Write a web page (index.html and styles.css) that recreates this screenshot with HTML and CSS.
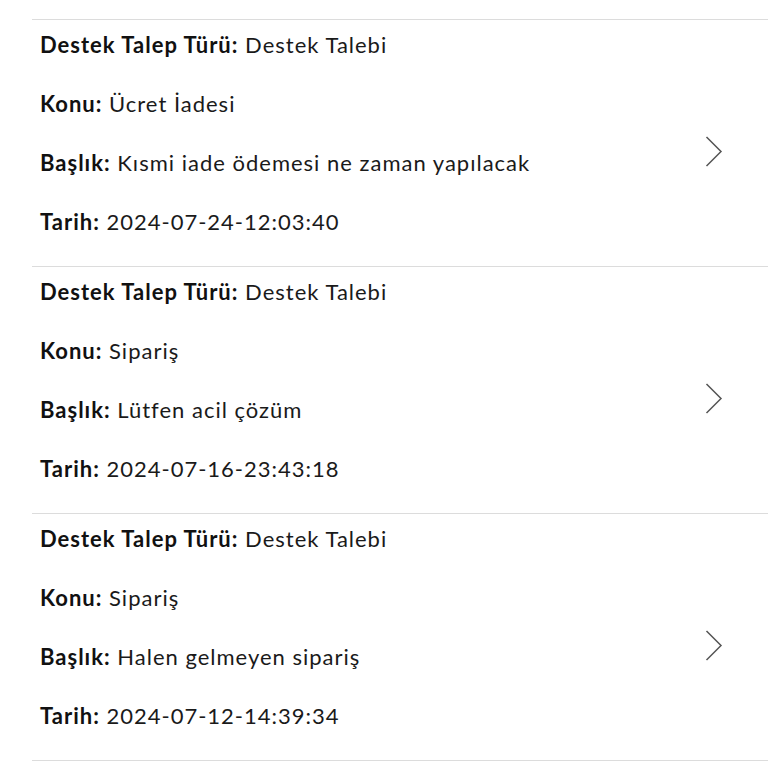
FILE: index.html
```html
<!DOCTYPE html>
<html lang="tr">
<head>
<meta charset="utf-8">
<link rel="stylesheet" href="styles.css">
</head>
<body>
<ul class="list">
  <li class="item">
    <div class="info">
      <p><b>Destek Talep Türü:</b> Destek Talebi</p>
      <p><b>Konu:</b> Ücret İadesi</p>
      <p><b>Başlık:</b> Kısmi iade ödemesi ne zaman yapılacak</p>
      <p><b>Tarih:</b> 2024-07-24-12:03:40</p>
    </div>
    <svg class="chev" width="18" height="32" viewBox="0 0 18 32"><path d="M1.5 1 L16 15.5 L1.5 30" fill="none" stroke="#555" stroke-width="1.5"/></svg>
  </li>
  <li class="item">
    <div class="info">
      <p><b>Destek Talep Türü:</b> Destek Talebi</p>
      <p><b>Konu:</b> Sipariş</p>
      <p><b>Başlık:</b> Lütfen acil çözüm</p>
      <p><b>Tarih:</b> 2024-07-16-23:43:18</p>
    </div>
    <svg class="chev" width="18" height="32" viewBox="0 0 18 32"><path d="M1.5 1 L16 15.5 L1.5 30" fill="none" stroke="#555" stroke-width="1.5"/></svg>
  </li>
  <li class="item">
    <div class="info">
      <p><b>Destek Talep Türü:</b> Destek Talebi</p>
      <p><b>Konu:</b> Sipariş</p>
      <p><b>Başlık:</b> Halen gelmeyen sipariş</p>
      <p><b>Tarih:</b> 2024-07-12-14:39:34</p>
    </div>
    <svg class="chev" width="18" height="32" viewBox="0 0 18 32"><path d="M1.5 1 L16 15.5 L1.5 30" fill="none" stroke="#555" stroke-width="1.5"/></svg>
  </li>
</ul>
</body>
</html>
```
FILE: styles.css
```css
html, body {
  margin: 0;
  padding: 0;
  background: #fff;
}
body {
  font-family: "Lato", "Noto Sans", sans-serif;
  color: #1a1a1a;
}
.list {
  list-style: none;
  margin: 19px 0 0 32px;
  padding: 0;
}
.item {
  display: flex;
  align-items: center;
  border-top: 1px solid #dcdcdc;
  padding: 10px 0 0 8px;
}
.item:last-child {
  border-bottom: 1px solid #dcdcdc;
}
.info {
  flex: 1;
}
.info p {
  margin: 0 0 29px 0;
  font-size: 22px;
  line-height: 30px;
  letter-spacing: 1px;
  white-space: nowrap;
}
.info b {
  font-weight: 700;
  color: #111;
}
.chev {
  margin: 8px 45px 0 0;
  flex: none;
}
```
